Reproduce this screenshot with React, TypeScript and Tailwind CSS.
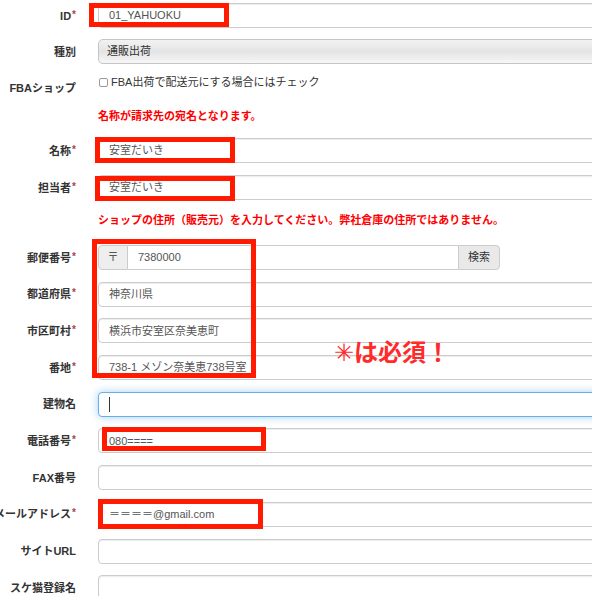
import React from "react";

const font = { fontFamily: '"Liberation Sans", "Noto Sans CJK JP", sans-serif' };

function Label({ text, req }: { text: string; req?: boolean }) {
  return (
    <div className="w-[76px] shrink-0 flex justify-end items-center whitespace-nowrap text-[11px] font-bold text-[#333] leading-[14px]">
      <span>{text}</span>
      {req && <span className="text-[#a94442] text-[10px] font-bold relative -top-[1px] ml-[1px]">*</span>}
    </div>
  );
}

function TextInput({ value, focus }: { value?: string; focus?: boolean }) {
  return (
    <div
      className={`ml-[22px] w-[520px] h-[25px] shrink-0 rounded-l-[4px] bg-white flex items-center pl-[10px] text-[11px] text-[#555] ${
        focus
          ? "border border-[#66afe9] shadow-[0_0_8px_rgba(102,175,233,0.6)]"
          : "border border-[#ccc] shadow-[inset_0_1px_1px_rgba(0,0,0,0.075)]"
      }`}
    >
      {value}
      {focus && <span className="block w-[1px] h-[15px] bg-[#333]" />}
    </div>
  );
}

function Row({ label, req, children }: { label: string; req?: boolean; children: React.ReactNode }) {
  return (
    <div className="flex items-center h-[25px]">
      <Label text={label} req={req} />
      {children}
    </div>
  );
}

export default function App() {
  return (
    <div className="relative w-[592px] h-[596px] overflow-hidden bg-white" style={font}>
      <div className="pt-[3px]">
        <Row label="ID" req>
          <TextInput value="01_YAHUOKU" />
        </Row>

        <div className="mt-[11px]">
          <Row label="種別">
            <div className="ml-[22px] w-[520px] h-[25px] shrink-0 rounded-l-[5px] border border-[#c4c4c4] bg-gradient-to-b from-[#f2f2f2] via-[#e4e4e4] to-[#f7f7f7] flex items-center pl-[8px] text-[11px] text-[#333]">
              通販出荷
            </div>
          </Row>
        </div>

        <div className="mt-[11px] flex h-[20px]">
          <div className="w-[76px] shrink-0 flex justify-end pt-[6px] text-[11px] font-bold text-[#333] leading-[14px] whitespace-nowrap">
            FBAショップ
          </div>
          <div className="ml-[22px] flex items-center h-[14px] text-[11px] text-[#333] leading-[14px]">
            <span className="block w-[9px] h-[9px] border border-[#999] rounded-[2px] bg-white mr-[3px] ml-[1px]" />
            FBA出荷で配送元にする場合にはチェック
          </div>
        </div>

        <div className="mt-[14px] ml-[98px] text-[11px] leading-[14px] font-bold text-[#ff0000]">
          名称が請求先の宛名となります。
        </div>

        <div className="mt-[15px]">
          <Row label="名称" req>
            <TextInput value="安室だいき" />
          </Row>
        </div>
        <div className="mt-[12px]">
          <Row label="担当者" req>
            <TextInput value="安室だいき" />
          </Row>
        </div>

        <div className="mt-[13px] ml-[98px] text-[11px] leading-[14px] font-bold text-[#ff0000] whitespace-nowrap">
          ショップの住所（販売元）を入力してください。弊社倉庫の住所ではありません。
        </div>

        <div className="mt-[18px] flex flex-col gap-[11.7px]">
          <Row label="郵便番号" req>
            <div className="ml-[22px] flex h-[25px] text-[11px]">
              <div className="w-[30px] flex items-center justify-center bg-[#eee] border border-[#ccc] rounded-l-[4px] text-[#555]">
                〒
              </div>
              <div className="w-[330px] flex items-center pl-[10px] border-y border-[#ccc] bg-white text-[#555]">
                7380000
              </div>
              <div className="w-[42px] flex items-center justify-center bg-[#e9e9e9] border border-[#ccc] rounded-r-[4px] text-[#333]">
                検索
              </div>
            </div>
          </Row>
          <Row label="都道府県" req>
            <TextInput value="神奈川県" />
          </Row>
          <Row label="市区町村" req>
            <TextInput value="横浜市安室区奈美恵町" />
          </Row>
          <Row label="番地" req>
            <TextInput value="738-1 メゾン奈美恵738号室" />
          </Row>
          <Row label="建物名">
            <TextInput focus />
          </Row>
          <Row label="電話番号" req>
            <TextInput value="080====" />
          </Row>
          <Row label="FAX番号">
            <TextInput />
          </Row>
          <Row label="メールアドレス" req>
            <TextInput value="＝＝＝＝@gmail.com" />
          </Row>
          <Row label="サイトURL">
            <TextInput />
          </Row>
          <Row label="スケ猫登録名">
            <TextInput />
          </Row>
        </div>
      </div>

      {/* annotation boxes */}
      <div className="absolute left-[89px] top-[3px] w-[140px] h-[24px] border-[5px] border-[#ff1a00]" />
      <div className="absolute left-[95px] top-[137px] w-[140px] h-[26px] border-[5px] border-[#ff1a00]" />
      <div className="absolute left-[95px] top-[176px] w-[140px] h-[25px] border-[5px] border-[#ff1a00]" />
      <div className="absolute left-[92px] top-[239px] w-[164px] h-[139px] border-[5px] border-[#ff1a00]" />
      <div className="absolute left-[102px] top-[427px] w-[164px] h-[24px] border-[5px] border-[#ff1a00]" />
      <div className="absolute left-[98px] top-[499px] w-[165px] h-[30px] border-[5px] border-[#ff1a00]" />
      <div className="absolute left-[334px] top-[339px] flex items-center text-[#ff2a2a] leading-[28px] whitespace-nowrap">
        <span className="text-[24px] font-light" style={{ fontFamily: '"DejaVu Sans", sans-serif' }}>
          {"\u2733\uFE0E"}
        </span>
        <span className="text-[24px] font-bold">は必須！</span>
      </div>
    </div>
  );
}
